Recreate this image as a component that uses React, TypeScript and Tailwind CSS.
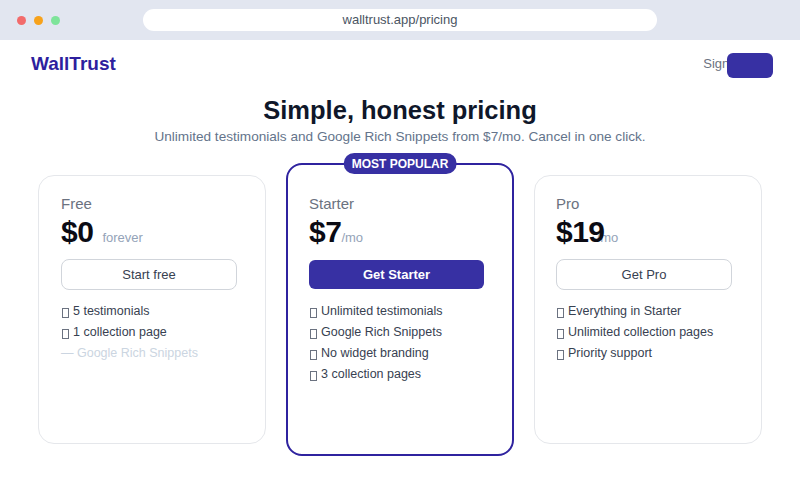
import React from "react";

const font = { fontFamily: '"Liberation Sans", Arial, sans-serif' };

function Box() {
  return <span className="inline-block w-[7px] h-[10px] border border-[#6b7280] ml-[1px] mr-[4px] translate-y-[1px]" />;
}

function Feature({ text, muted }: { text: string; muted?: boolean }) {
  if (muted) {
    return <li className="text-[#cbd5e1] h-[21px] flex items-center">— {text}</li>;
  }
  return (
    <li className="text-[#374151] h-[21px] flex items-center">
      <Box />
      {text}
    </li>
  );
}

export default function App() {
  return (
    <div className="w-[800px] h-[479px] bg-white overflow-hidden" style={font}>
      {/* browser chrome */}
      <div className="h-[40px] bg-[#e2e6f0] flex items-center relative">
        <div className="flex gap-[8px] pl-[17px]">
          <span className="w-[9px] h-[9px] rounded-full bg-[#f26b6b]" />
          <span className="w-[9px] h-[9px] rounded-full bg-[#f7a21b]" />
          <span className="w-[9px] h-[9px] rounded-full bg-[#7ee49a]" />
        </div>
        <div className="absolute left-[143px] top-[9px] w-[514px] h-[22px] rounded-full bg-white flex items-center justify-center text-[13px] text-[#4b5563]">
          walltrust.app/pricing
        </div>
      </div>

      {/* nav */}
      <div className="h-[48px] flex items-center justify-between pl-[31px] pr-[27px]">
        <span className="text-[19px] font-bold text-[#2e1f9e]">WallTrust</span>
        <div className="flex items-center">
          <span className="text-[13px] text-[#6b7280] whitespace-nowrap">Sign in</span>
          <span className="w-[46px] h-[25px] rounded-md bg-[#3730a3] ml-[-16px] translate-y-[1px]" />
        </div>
      </div>

      {/* heading */}
      <div className="text-center">
        <h1 className="text-[25.5px] leading-[32px] font-bold text-[#0f172a] mt-[6px]">Simple, honest pricing</h1>
        <p className="text-[13.6px] leading-[20px] text-[#64748b] mt-[1px]">
          Unlimited testimonials and Google Rich Snippets from $7/mo. Cancel in one click.
        </p>
      </div>

      {/* cards */}
      <div className="w-[724px] mx-auto grid grid-cols-3 gap-[20px] items-center mt-[16px]">
        {/* Free */}
        <div className="h-[269px] rounded-2xl border border-[#e5e7eb] pl-[22px] pt-[18px]">
          <div className="text-[15px] leading-[20px] text-[#6b7280]">Free</div>
          <div className="flex items-baseline h-[34px] mt-[1px]">
            <span className="text-[30px] leading-[34px] font-bold text-[#0b0b14] tracking-[-0.5px]">$0</span>
            <span className="text-[13px] text-[#94a3b8] ml-[9px]">forever</span>
          </div>
          <button className="w-[176px] h-[31px] mt-[10px] rounded-lg border border-[#d1d5db] text-[13px] text-[#374151] bg-white">
            Start free
          </button>
          <ul className="mt-[11px] text-[12.5px]">
            <Feature text="5 testimonials" />
            <Feature text="1 collection page" />
            <Feature text="Google Rich Snippets" muted />
          </ul>
        </div>

        {/* Starter */}
        <div className="relative h-[293px] rounded-2xl border-2 border-[#2f239f] pl-[21px] pt-[29px]">
          <span className="absolute left-1/2 -translate-x-1/2 top-[-12px] h-[21px] px-[8px] rounded-full bg-[#3730a3] text-white text-[12px] font-bold flex items-center whitespace-nowrap">
            MOST POPULAR
          </span>
          <div className="text-[15px] leading-[20px] text-[#6b7280]">Starter</div>
          <div className="flex items-baseline h-[34px] mt-[1px]">
            <span className="text-[30px] leading-[34px] font-bold text-[#0b0b14] tracking-[-0.5px]">$7</span>
            <span className="text-[13px] text-[#94a3b8]">/mo</span>
          </div>
          <button className="w-[175px] h-[29px] mt-[11px] rounded-md bg-[#3730a3] text-[13px] font-bold text-white">
            Get Starter
          </button>
          <ul className="mt-[12px] text-[12.5px]">
            <Feature text="Unlimited testimonials" />
            <Feature text="Google Rich Snippets" />
            <Feature text="No widget branding" />
            <Feature text="3 collection pages" />
          </ul>
        </div>

        {/* Pro */}
        <div className="h-[269px] rounded-2xl border border-[#e5e7eb] pl-[21px] pt-[18px]">
          <div className="text-[15px] leading-[20px] text-[#6b7280]">Pro</div>
          <div className="flex items-baseline h-[34px] mt-[1px]">
            <span className="text-[30px] leading-[34px] font-bold text-[#0b0b14] tracking-[-0.5px] relative z-10">$19</span>
            <span className="text-[13px] text-[#94a3b8] ml-[-8px]">/mo</span>
          </div>
          <button className="w-[176px] h-[31px] mt-[10px] rounded-lg border border-[#d1d5db] text-[13px] text-[#374151] bg-white">
            Get Pro
          </button>
          <ul className="mt-[11px] text-[12.5px]">
            <Feature text="Everything in Starter" />
            <Feature text="Unlimited collection pages" />
            <Feature text="Priority support" />
          </ul>
        </div>
      </div>
    </div>
  );
}
